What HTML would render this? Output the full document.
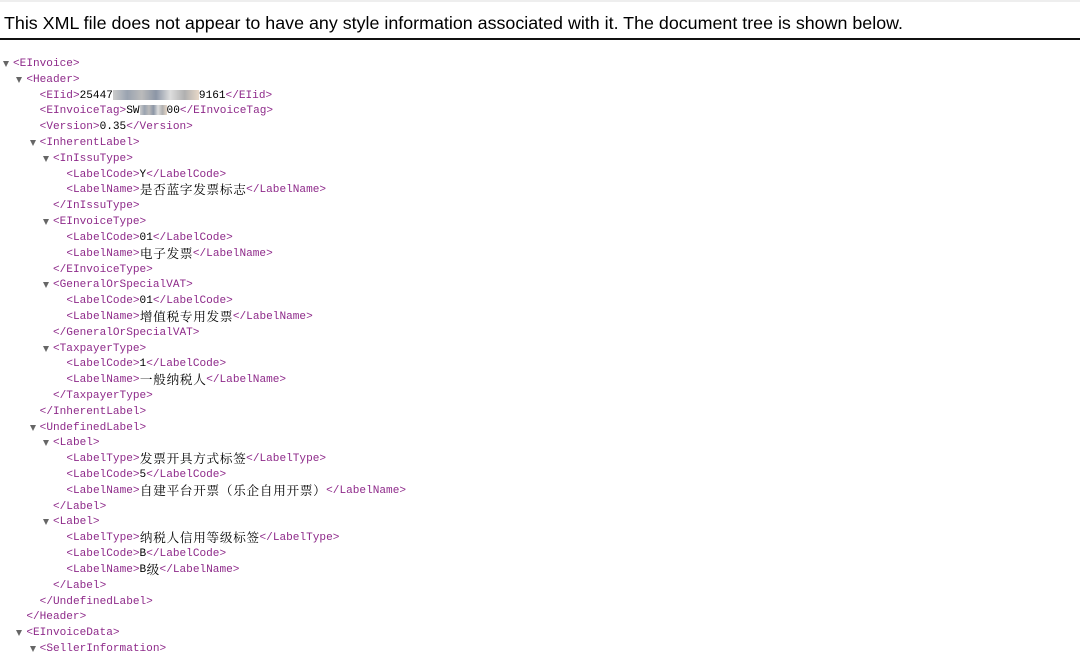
<!DOCTYPE html>
<html><head><meta charset="utf-8"><style>
html,body{margin:0;padding:0;background:#fff;width:1080px;height:653px;overflow:hidden;position:relative}
.top{position:absolute;left:0;top:0;width:1080px;height:2px;background:#eee}
.hl{position:absolute;left:0;top:38px;width:1080px;height:2px;background:#111}
.ln{position:absolute;height:16px;line-height:16px;white-space:pre;font-family:"Liberation Mono","Noto Serif CJK SC",monospace;font-size:11.1px;color:#000}
.t{color:#8e2a8a}
.c{font-family:"Noto Serif CJK SC",serif;font-size:12.6px;display:inline-block;width:13.33px;text-align:center;line-height:14px;vertical-align:top}
.tri{position:absolute;width:0;height:0;border-left:3.5px solid transparent;border-right:3.5px solid transparent;border-top:6px solid #666}
.blur{display:inline-block;height:10px;vertical-align:middle;background:linear-gradient(90deg,#ccc,#9aa3b0,#bbb,#8c96a6,#ddd,#b0b0b0,#e8d8c8)}
</style></head><body>
<div class="top"></div>
<svg style="position:absolute;left:0;top:0" width="1080" height="40"><text x="4" y="29" font-family="Liberation Sans, sans-serif" font-size="17.5" fill="#000" textLength="899" lengthAdjust="spacingAndGlyphs">This XML file does not appear to have any style information associated with it. The document tree is shown below.</text></svg>
<div class="hl"></div>
<div id="tree"></div>
<script>
var L=[
[0,1,'<EInvoice>'],
[1,1,'<Header>'],
[2,0,'<EIid>25447{B}9161</EIid>'],
[2,0,'<EInvoiceTag>SW{b}00</EInvoiceTag>'],
[2,0,'<Version>0.35</Version>'],
[2,1,'<InherentLabel>'],
[3,1,'<InIssuType>'],
[4,0,'<LabelCode>Y</LabelCode>'],
[4,0,'<LabelName>是否蓝字发票标志</LabelName>'],
[3,0,'</InIssuType>'],
[3,1,'<EInvoiceType>'],
[4,0,'<LabelCode>01</LabelCode>'],
[4,0,'<LabelName>电子发票</LabelName>'],
[3,0,'</EInvoiceType>'],
[3,1,'<GeneralOrSpecialVAT>'],
[4,0,'<LabelCode>01</LabelCode>'],
[4,0,'<LabelName>增值税专用发票</LabelName>'],
[3,0,'</GeneralOrSpecialVAT>'],
[3,1,'<TaxpayerType>'],
[4,0,'<LabelCode>1</LabelCode>'],
[4,0,'<LabelName>一般纳税人</LabelName>'],
[3,0,'</TaxpayerType>'],
[2,0,'</InherentLabel>'],
[2,1,'<UndefinedLabel>'],
[3,1,'<Label>'],
[4,0,'<LabelType>发票开具方式标签</LabelType>'],
[4,0,'<LabelCode>5</LabelCode>'],
[4,0,'<LabelName>自建平台开票（乐企自用开票）</LabelName>'],
[3,0,'</Label>'],
[3,1,'<Label>'],
[4,0,'<LabelType>纳税人信用等级标签</LabelType>'],
[4,0,'<LabelCode>B</LabelCode>'],
[4,0,'<LabelName>B级</LabelName>'],
[3,0,'</Label>'],
[2,0,'</UndefinedLabel>'],
[1,0,'</Header>'],
[1,1,'<EInvoiceData>'],
[2,1,'<SellerInformation>']
];
function esc(s){return s.replace(/&/g,'&amp;').replace(/</g,'&lt;').replace(/>/g,'&gt;')}
var h='';
L.forEach(function(r,i){
 var y=56+i*15.81, x=13+r[0]*13.33;
 if(r[1]) h+='<div class="tri" style="left:'+(x-10)+'px;top:'+(y+5)+'px"></div>';
 var s=r[2], out='';
 var parts=s.split(/(<[^>]*>)/);
 parts.forEach(function(p){
  if(!p)return;
  if(p[0]=='<'){out+='<span class="t">'+esc(p)+'</span>';return;}
  p=p.replace('{B}','\u0001').replace('{b}','\u0002');
  for(var k=0;k<p.length;k++){var ch=p[k];
   if(ch=='\u0001')out+='<span class="blur" style="width:86px"></span>';
   else if(ch=='\u0002')out+='<span class="blur" style="width:27px"></span>';
   else if(ch.charCodeAt(0)>0x2e80)out+='<span class="c">'+ch+'</span>';
   else out+=esc(ch);}
 });
 h+='<div class="ln" style="left:'+x+'px;top:'+y+'px">'+out+'</div>';
});
document.getElementById('tree').innerHTML=h;
</script>
</body></html>
